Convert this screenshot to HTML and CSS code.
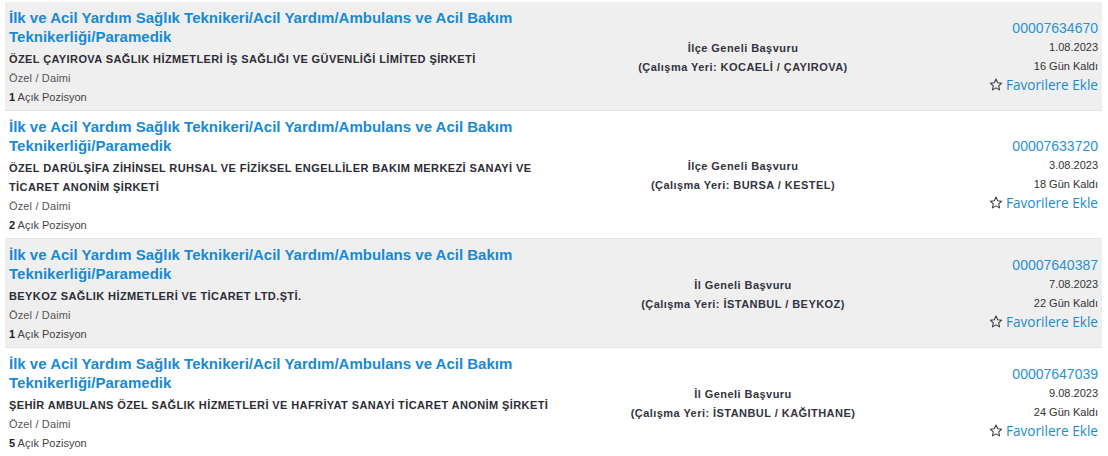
FILE: index.html
```html
<!DOCTYPE html>
<html lang="tr">
<head>
<meta charset="utf-8">
<title>İlanlar</title>
<link rel="stylesheet" href="styles.css">
</head>
<body>
<div class="list">
  <div class="row alt">
    <div class="main">
      <a class="title" href="#">İlk ve Acil Yardım Sağlık Teknikeri/Acil Yardım/Ambulans ve Acil Bakım Teknikerliği/Paramedik</a>
      <div class="company">ÖZEL ÇAYIROVA SAĞLIK HİZMETLERİ İŞ SAĞLIĞI VE GÜVENLİĞİ LİMİTED ŞİRKETİ</div>
      <div class="type">Özel / Daimi</div>
      <div class="open"><b>1</b> Açık Pozisyon</div>
    </div>
    <div class="place">
      <div>İlçe Geneli Başvuru</div>
      <div>(Çalışma Yeri: KOCAELİ / ÇAYIROVA)</div>
    </div>
    <div class="side">
      <a class="no" href="#">00007634670</a>
      <div class="date">1.08.2023</div>
      <div class="left">16 Gün Kaldı</div>
      <a class="fav" href="#"><svg class="star" viewBox="0 0 12 12"><path d="M6 0.9 L7.45 4.1 L10.9 4.45 L8.3 6.75 L9.05 10.2 L6 8.45 L2.95 10.2 L3.7 6.75 L1.1 4.45 L4.55 4.1 Z"/></svg>Favorilere Ekle</a>
    </div>
  </div>
  <div class="row">
    <div class="main">
      <a class="title" href="#">İlk ve Acil Yardım Sağlık Teknikeri/Acil Yardım/Ambulans ve Acil Bakım Teknikerliği/Paramedik</a>
      <div class="company">ÖZEL DARÜLŞİFA ZİHİNSEL RUHSAL VE FİZİKSEL ENGELLİLER BAKIM MERKEZİ SANAYİ VE TİCARET ANONİM ŞİRKETİ</div>
      <div class="type">Özel / Daimi</div>
      <div class="open"><b>2</b> Açık Pozisyon</div>
    </div>
    <div class="place">
      <div>İlçe Geneli Başvuru</div>
      <div>(Çalışma Yeri: BURSA / KESTEL)</div>
    </div>
    <div class="side">
      <a class="no" href="#">00007633720</a>
      <div class="date">3.08.2023</div>
      <div class="left">18 Gün Kaldı</div>
      <a class="fav" href="#"><svg class="star" viewBox="0 0 12 12"><path d="M6 0.9 L7.45 4.1 L10.9 4.45 L8.3 6.75 L9.05 10.2 L6 8.45 L2.95 10.2 L3.7 6.75 L1.1 4.45 L4.55 4.1 Z"/></svg>Favorilere Ekle</a>
    </div>
  </div>
  <div class="row alt">
    <div class="main">
      <a class="title" href="#">İlk ve Acil Yardım Sağlık Teknikeri/Acil Yardım/Ambulans ve Acil Bakım Teknikerliği/Paramedik</a>
      <div class="company">BEYKOZ SAĞLIK HİZMETLERİ VE TİCARET LTD.ŞTİ.</div>
      <div class="type">Özel / Daimi</div>
      <div class="open"><b>1</b> Açık Pozisyon</div>
    </div>
    <div class="place">
      <div>İl Geneli Başvuru</div>
      <div>(Çalışma Yeri: İSTANBUL / BEYKOZ)</div>
    </div>
    <div class="side">
      <a class="no" href="#">00007640387</a>
      <div class="date">7.08.2023</div>
      <div class="left">22 Gün Kaldı</div>
      <a class="fav" href="#"><svg class="star" viewBox="0 0 12 12"><path d="M6 0.9 L7.45 4.1 L10.9 4.45 L8.3 6.75 L9.05 10.2 L6 8.45 L2.95 10.2 L3.7 6.75 L1.1 4.45 L4.55 4.1 Z"/></svg>Favorilere Ekle</a>
    </div>
  </div>
  <div class="row">
    <div class="main">
      <a class="title" href="#">İlk ve Acil Yardım Sağlık Teknikeri/Acil Yardım/Ambulans ve Acil Bakım Teknikerliği/Paramedik</a>
      <div class="company">ŞEHİR AMBULANS ÖZEL SAĞLIK HİZMETLERİ VE HAFRİYAT SANAYİ TİCARET ANONİM ŞİRKETİ</div>
      <div class="type">Özel / Daimi</div>
      <div class="open"><b>5</b> Açık Pozisyon</div>
    </div>
    <div class="place">
      <div>İl Geneli Başvuru</div>
      <div>(Çalışma Yeri: İSTANBUL / KAĞITHANE)</div>
    </div>
    <div class="side">
      <a class="no" href="#">00007647039</a>
      <div class="date">9.08.2023</div>
      <div class="left">24 Gün Kaldı</div>
      <a class="fav" href="#"><svg class="star" viewBox="0 0 12 12"><path d="M6 0.9 L7.45 4.1 L10.9 4.45 L8.3 6.75 L9.05 10.2 L6 8.45 L2.95 10.2 L3.7 6.75 L1.1 4.45 L4.55 4.1 Z"/></svg>Favorilere Ekle</a>
    </div>
  </div>
</div>
</body>
</html>
```
FILE: styles.css
```css
html, body {
  margin: 0;
  padding: 0;
  background: #ffffff;
}
body {
  font-family: "Liberation Sans", Arial, sans-serif;
  color: #333;
  font-size: 11px;
  overflow: hidden;
}
a { text-decoration: none; }

.list {
  margin: 2px 0 0 5px;
  width: 1097px;
}
.row {
  display: grid;
  grid-template-columns: 548px 372px 1fr;
  padding: 6px 4px 3px 4px;
  border-bottom: 1px solid #e4e4e4;
  background: #fff;
}
.row.alt { background: #efefef; }

.main { display: flex; flex-direction: column; }
.title {
  display: block;
  font-size: 15px;
  font-weight: bold;
  line-height: 19px;
  color: #188ad4;
}
.company {
  margin-top: 4px;
  font-weight: bold;
  font-size: 11px;
  letter-spacing: 0.4px;
  line-height: 19px;
  color: #2c2c36;
}
.type {
  line-height: 19px;
  color: #555;
  letter-spacing: 0.15px;
}
.open {
  line-height: 19px;
  color: #444;
}
.open b { color: #222; }

.place {
  align-self: center;
  text-align: center;
  font-weight: bold;
  letter-spacing: 0.45px;
  line-height: 19px;
  color: #333340;
}

.side {
  align-self: center;
  display: flex;
  flex-direction: column;
  align-items: flex-end;
  text-align: right;
  padding-bottom: 4px;
}
.no {
  font-size: 14px;
  line-height: 20px;
  color: #2b92d4;
}
.date, .left {
  line-height: 19px;
  color: #333;
}
.fav {
  display: flex;
  align-items: center;
  font-family: "Open Sans", "Liberation Sans", sans-serif;
  font-size: 13.6px;
  line-height: 18px;
  color: #1b8bd2;
}
.star {
  width: 14px;
  height: 14px;
  margin-right: 3px;
  fill: none;
  stroke: #3a3a3a;
  stroke-width: 0.9;
  stroke-linejoin: round;
}
```
